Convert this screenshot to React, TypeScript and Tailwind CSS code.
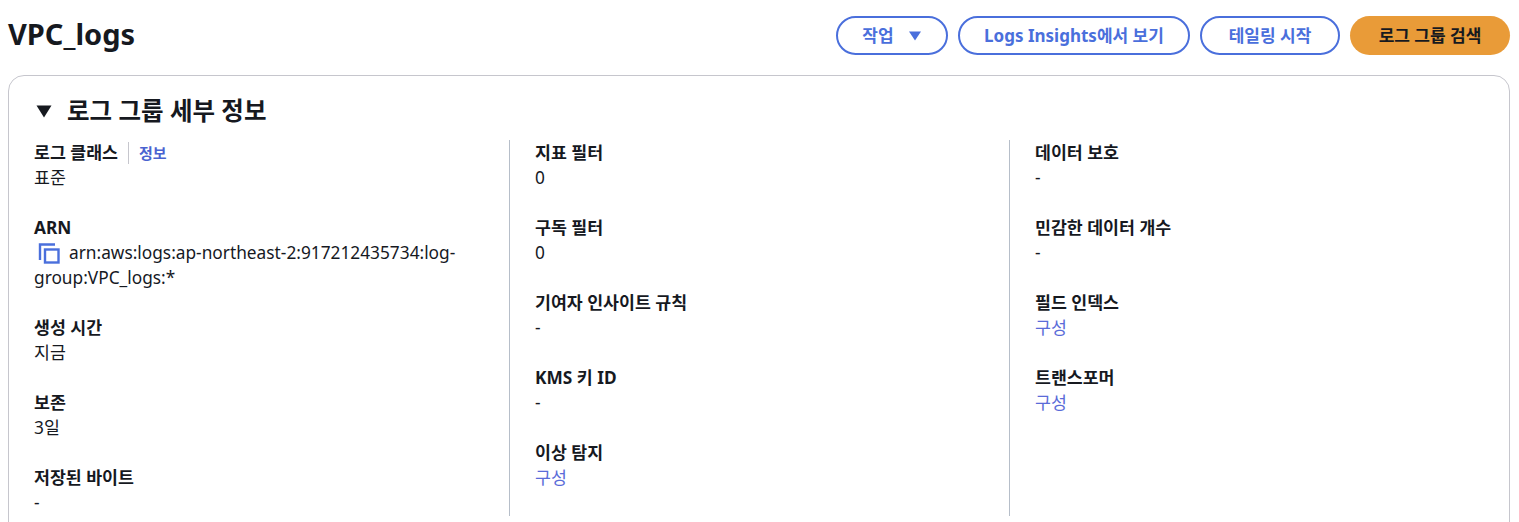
import React from "react";

const font = "font-['Noto_Sans','Noto_Sans_CJK_KR',sans-serif]";

const Field = ({ label, children }: { label: React.ReactNode; children: React.ReactNode }) => (
  <div className="mb-[25px]">
    <div className="text-[17.3px] leading-[25px] font-bold text-[#16191f]">{label}</div>
    <div className="text-[17.3px] leading-[25px] text-[#16191f]">{children}</div>
  </div>
);

const Config = () => <span className="text-[#5a6bd8]">구성</span>;

const OutlineButton = ({ children, className }: { children: React.ReactNode; className: string }) => (
  <button className={`h-[39px] rounded-full border-2 border-[#4a6fdc] bg-white text-[17px] font-bold text-[#4a6fdc] flex items-center justify-center ${className}`}>
    {children}
  </button>
);

const CopyIcon = () => (
  <svg width="22" height="22" viewBox="0 0 22 22" fill="none" className="inline-block align-[-5px] ml-1 mr-[9px]">
    <path d="M2 18V2.5H17" stroke="#4a6fdc" strokeWidth="2.4" />
    <rect x="7" y="7.5" width="13.5" height="13" stroke="#4a6fdc" strokeWidth="2.4" />
  </svg>
);

export default function App() {
  return (
    <div className={`h-[522px] overflow-hidden bg-white pl-2 pr-[9px] pt-4 text-[#16191f] ${font}`}>
      <div className="flex items-center justify-between">
        <h1 className="text-[29px] leading-[34px] pb-[4px] font-bold text-[#16191f]">VPC_logs</h1>
        <div className="flex gap-[10px]">
          <OutlineButton className="w-[112px]">
            작업
            <svg width="14" height="10" viewBox="0 0 14 10" className="ml-[14px]">
              <path d="M1 0.5H13L7 9.5Z" fill="#4a6fdc" />
            </svg>
          </OutlineButton>
          <OutlineButton className="w-[232px]">Logs Insights에서 보기</OutlineButton>
          <OutlineButton className="w-[140px]">테일링 시작</OutlineButton>
          <button className="h-[39px] w-[160px] rounded-full bg-[#e99b38] text-[17px] font-bold text-[#16191f]">
            로그 그룹 검색
          </button>
        </div>
      </div>

      <div className="mt-[20px] rounded-t-2xl border border-[#c6c6cd] bg-white h-[600px] pl-[25px] pr-[25px]">
        <div className="flex items-center h-[64px] pb-[1px] pt-[7px]">
          <svg width="16" height="13" viewBox="0 0 16 13" className="ml-[2px]">
            <path d="M0.5 0.5H15.5L8 12.5Z" fill="#16191f" />
          </svg>
          <h2 className="ml-[15px] text-[24.5px] font-bold leading-[30px]">로그 그룹 세부 정보</h2>
        </div>

        <div className="grid grid-cols-[476px_500px_1fr]">
          <div className="h-[376px] pr-[40px] border-r border-[#b6bec9]">
            <Field
              label={
                <span className="flex items-center">
                  로그 클래스
                  <span className="ml-[10px] border-l border-[#c6c6cd] pl-[10px] text-[15px] leading-[22px] text-[#4a62d0]">정보</span>
                </span>
              }
            >
              표준
            </Field>
            <Field label="ARN">
              <CopyIcon />
              arn:aws:logs:ap-northeast-2:917212435734:log-group:VPC_logs:*
            </Field>
            <Field label="생성 시간">지금</Field>
            <Field label="보존">3일</Field>
            <Field label="저장된 바이트">-</Field>
          </div>
          <div className="h-[376px] pl-[25px] border-r border-[#b6bec9]">
            <Field label="지표 필터">0</Field>
            <Field label="구독 필터">0</Field>
            <Field label="기여자 인사이트 규칙">-</Field>
            <Field label="KMS 키 ID">-</Field>
            <Field label="이상 탐지"><Config /></Field>
          </div>
          <div className="h-[376px] pl-[25px]">
            <Field label="데이터 보호">-</Field>
            <Field label="민감한 데이터 개수">-</Field>
            <Field label="필드 인덱스"><Config /></Field>
            <Field label="트랜스포머"><Config /></Field>
          </div>
        </div>
      </div>
    </div>
  );
}
